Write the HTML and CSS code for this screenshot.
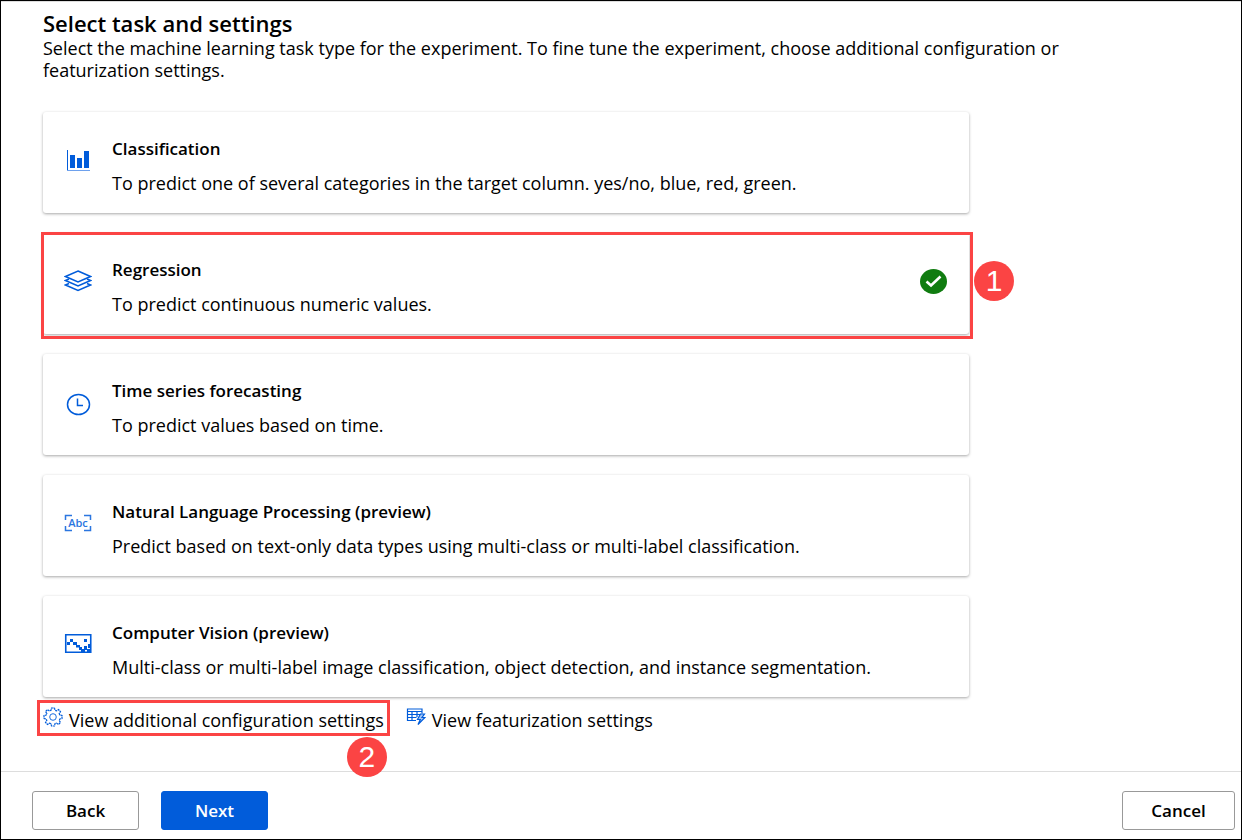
FILE: index.html
```html
<!DOCTYPE html>
<html lang="en">
<head>
<meta charset="utf-8">
<meta name="viewport" content="width=device-width, initial-scale=1">
<title>Select task and settings</title>
<link rel="stylesheet" href="styles.css">
</head>
<body>
<form class="wizard">
  <main class="content">
    <h1 class="title">Select task and settings</h1>
    <p class="intro">Select the machine learning task type for the experiment. To fine tune the experiment, choose additional configuration or featurization settings.</p>

    <div class="tasks" role="radiogroup" aria-label="Task type">
      <label class="card" for="task-classification">
        <input class="card-input" type="radio" name="task" id="task-classification">
        <svg class="card-icon" viewBox="0 0 28 28" aria-hidden="true">
          <path d="M3.500 3v21" stroke="#015cda" fill="none"/><path d="M3 23.500h23" stroke="#6ea1ed" fill="none"/>
          <path d="M6 8h5v13H6zM13 11h5v10h-5zM20 4h5v17h-5z" fill="#015cda"/>
        </svg>
        <span class="card-text">
          <span class="card-name">Classification</span>
          <span class="card-desc">To predict one of several categories in the target column. yes/no, blue, red, green.</span>
        </span>
      </label>

      <label class="card card-marked" for="task-regression">
        <input class="card-input" type="radio" name="task" id="task-regression" checked>
        <svg class="card-icon" viewBox="0 0 28 28" aria-hidden="true">
          <g fill="none" stroke="#015cda" stroke-width="1.500">
            <path d="M14 3 26.500 8.500 14 14 1.500 8.500z"/>
            <path d="M5 11 1.500 12.500 14 18l12.500-5.500L23 11"/>
            <path d="M5 15.500 1.500 17 14 22.500 26.500 17 23 15.500"/>
          </g>
        </svg>
        <span class="card-text">
          <span class="card-name">Regression</span>
          <span class="card-desc">To predict continuous numeric values.</span>
        </span>
        <svg class="card-check" viewBox="0 0 28 26" aria-hidden="true">
          <ellipse cx="13.500" cy="12.500" rx="13.500" ry="12.500" fill="#107c10"/>
          <path d="m6.500 12.500 4.500 4 9.500-9" fill="none" stroke="#fff" stroke-width="2.600"/>
        </svg>
        <span class="badge badge-side">1</span>
      </label>

      <label class="card" for="task-forecast">
        <input class="card-input" type="radio" name="task" id="task-forecast">
        <svg class="card-icon" viewBox="0 0 28 28" aria-hidden="true">
          <g fill="none" stroke="#015cda" stroke-width="1.500">
            <ellipse cx="14.500" cy="15.500" rx="11" ry="10"/>
            <path d="M13.500 9.500v7H19"/>
          </g>
        </svg>
        <span class="card-text">
          <span class="card-name">Time series forecasting</span>
          <span class="card-desc">To predict values based on time.</span>
        </span>
      </label>

      <label class="card" for="task-nlp">
        <input class="card-input" type="radio" name="task" id="task-nlp">
        <svg class="card-icon" viewBox="0 0 28 28" aria-hidden="true">
          <path d="M8 5.500H1.500V10M20 5.500h6.500V10M1.500 16v4.500H8M26.500 16v4.500H20" fill="none" stroke="#2b76e0" stroke-width="1.500"/>
          <text class="icon-text" x="14" y="17" text-anchor="middle">Abc</text>
        </svg>
        <span class="card-text">
          <span class="card-name">Natural Language Processing (preview)</span>
          <span class="card-desc">Predict based on text-only data types using multi-class or multi-label classification.</span>
        </span>
      </label>

      <label class="card" for="task-vision">
        <input class="card-input" type="radio" name="task" id="task-vision">
        <svg class="card-icon" viewBox="0 0 28 28" aria-hidden="true">
          <path d="M1.750 3.750h25v17.500h-25z" fill="none" stroke="#015cda" stroke-width="1.600"/>
          <path d="M6 8h3v3H6zM3 11h3v3H3zM9 11h4v3H9zM12 14h4v2.500h-4zM15 16h3v3h-3zM17 18h4v3h-4zM20 8h3v3h-3zM20 15h3v4h-3zM24 13h3v4h-3zM23 18h4v3h-4z" fill="#015cda"/>
        </svg>
        <span class="card-text">
          <span class="card-name">Computer Vision (preview)</span>
          <span class="card-desc">Multi-class or multi-label image classification, object detection, and instance segmentation.</span>
        </span>
      </label>
    </div>

    <div class="links">
      <button class="link link-marked" type="button">
        <svg class="link-icon" viewBox="0 0 20 20" aria-hidden="true">
          <g fill="none" stroke="#015cda">
            <path d="M8.500 1h3l.5 2.300 1.500.6L15.500 2.600l2 2-1.300 2 .6 1.400 2.200.5v3l-2.200.5-.6 1.400 1.300 2-2 2-2-1.300-1.500.6-.5 2.300h-3L8 16.700l-1.500-.6-2 1.300-2-2 1.300-2L3.200 12 1 11.500v-3L3.200 8l.6-1.400-1.300-2 2-2 2 1.300L8 3.300z" stroke-width="1.200" stroke-dasharray="2.200 .6"/>
            <circle cx="10" cy="10" r="3.300" stroke-width=".9"/>
          </g>
        </svg>
        <span class="link-text">View additional configuration settings</span>
        <span class="badge badge-below">2</span>
      </button>
      <button class="link" type="button">
        <svg class="link-icon" viewBox="0 0 20 20" aria-hidden="true">
          <g fill="none" stroke="#015cda" stroke-width="1.200">
            <path d="M10 13.500H1.500V2h14.500v4.500M1.500 4.500H16M1.500 7.500H14M1.500 10.500h9M6 4.500v9M11 4.500V10"/>
            <path d="m14.500 7-3 5.500h2.800L12 17.500 19 10.500h-3L18.500 7z" fill="#a9c8f5"/>
          </g>
        </svg>
        <span class="link-text">View featurization settings</span>
      </button>
    </div>
  </main>

  <footer class="actions">
    <button class="btn" type="button">Back</button>
    <button class="btn btn-primary" type="submit">Next</button>
    <button class="btn btn-cancel" type="button">Cancel</button>
  </footer>
</form>
</body>
</html>
```
FILE: styles.css
```css
* {
  box-sizing: border-box;
}

body {
  margin: 0;
  background: #fff;
  color: #000;
  font-family: "Open Sans", "Noto Sans", sans-serif;
  font-size: 18px;
  line-height: 22px;
}

button {
  color: inherit;
  font: inherit;
  cursor: pointer;
}

.wizard {
  display: flex;
  flex-direction: column;
  min-height: 100vh;
  border: 1px solid #000;
}

.content {
  flex: 1;
  padding: 7px 42px 32px;
  border-top: 1px solid #ddd;
}

.title {
  margin: 0;
  font-size: 22px;
  font-weight: 600;
  line-height: 28px;
}

.intro {
  max-width: 1040px;
  margin: 0 0 31px;
}

.tasks {
  display: flex;
  flex-direction: column;
  gap: 20px;
  max-width: 926px;
}

.card {
  position: relative;
  display: flex;
  align-items: center;
  gap: 20px;
  min-height: 101px;
  padding: 0 21px 4px;
  border-radius: 3px;
  box-shadow: 0 1px 3px rgba(0, 0, 0, 0.35);
}

.card-marked::after {
  content: "";
  position: absolute;
  inset: -1px -4px -5px -2px;
  border: 3px solid #fb4444;
  pointer-events: none;
}

.card-input {
  position: absolute;
  opacity: 0;
}

.card-icon {
  flex: none;
  width: 28px;
  height: 28px;
}

.icon-text {
  fill: #2b76e0;
  font-size: 11px;
  font-weight: 600;
}

.card-text {
  display: flex;
  flex: 1;
  flex-direction: column;
  gap: 12px;
  padding-top: 10px;
}

.card-name {
  font-size: 17px;
  font-weight: 600;
}

.card-check {
  flex: none;
  width: 28px;
  height: 26px;
}

.badge {
  position: absolute;
  width: 40px;
  height: 40px;
  border-radius: 50%;
  background: #fb4444;
  color: #fff;
  font-family: "Liberation Sans", Arial, sans-serif;
  font-size: 30px;
  line-height: 40px;
  text-align: center;
}

.badge-side {
  top: 28px;
  left: calc(100% + 5px);
}

.badge-below {
  top: 34px;
  right: 0;
}

.links {
  display: flex;
  gap: 10px;
  margin: 3px 0 0 -6px;
}

.link {
  position: relative;
  display: flex;
  align-items: flex-start;
  gap: 6px;
  padding: 4px 3px 2px;
  border: 3px solid transparent;
  background: none;
}

.link-marked {
  border-color: #fb4444;
}

.link-icon {
  width: 20px;
  height: 20px;
}

.link-text {
  padding-top: 2px;
}

.actions {
  display: flex;
  gap: 22px;
  padding: 19px 6px 9px 31px;
  border-top: 1px solid #ddd;
}

.btn {
  min-width: 107px;
  height: 39px;
  padding: 0 26px;
  border: 1px solid #999;
  border-radius: 3px;
  background: #fff;
  font-size: 17px;
  font-weight: 600;
}

.btn-primary {
  border-color: #015cda;
  background: #015cda;
  color: #fff;
}

.btn-cancel {
  min-width: 113px;
  margin-left: auto;
}
```
